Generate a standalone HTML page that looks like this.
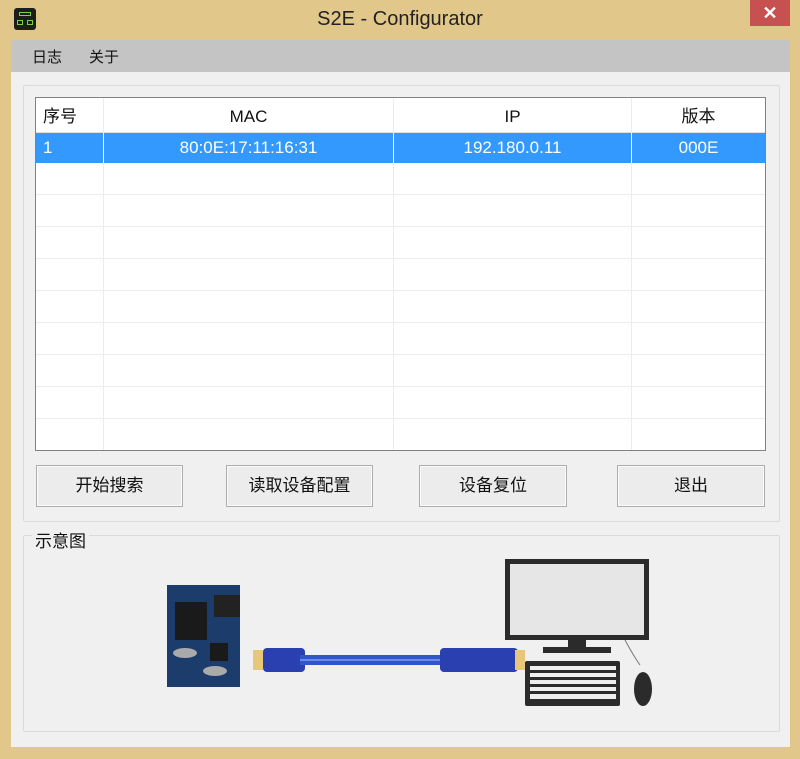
<!DOCTYPE html>
<html><head><meta charset="utf-8"><style>
*{margin:0;padding:0;box-sizing:border-box}
body{width:800px;height:759px;background:#e2c78a;position:relative;overflow:hidden;font-family:"Liberation Sans","Noto Sans CJK SC",sans-serif;color:#111}
.a{position:absolute}
.title{left:0;top:0;width:800px;height:40px;text-align:center;font-size:20px;line-height:38px;color:#222}
.menu{left:11px;top:40px;width:779px;height:32px;background:#c4c4c4;font-size:15px}
.client{left:11px;top:72px;width:779px;height:675px;background:#f0f0f0}
.grp{border:1px solid #dadada;border-radius:2px}
.list{left:35px;top:97px;width:731px;height:354px;background:#fff;border:1px solid #828282}
.row{position:absolute;left:0;width:729px;height:32px;border-bottom:1px solid #ececec}
.cell{position:absolute;top:0;height:100%;text-align:center;font-size:17px;line-height:31px;border-right:1px solid #ececec}
.btn{height:42px;background:#ececec;border:1px solid #adadad;box-shadow:inset 0 0 0 1px #fafafa;font-size:17px;text-align:center;line-height:40px}
</style></head><body>
<div class="a" style="left:14px;top:8px;width:22px;height:22px;background:#1d1d1d;border-radius:3px"><div class="a" style="left:5px;top:4px;width:12px;height:4px;border:1.5px solid #7fd13b"></div><div class="a" style="left:3px;top:12px;width:6px;height:5px;border:1.5px solid #7fd13b"></div><div class="a" style="left:13px;top:12px;width:6px;height:5px;border:1.5px solid #7fd13b"></div></div>
<div class="a title">S2E - Configurator</div>
<div class="a" style="left:750px;top:0;width:40px;height:26px;background:#c75050;color:#fff;text-align:center;font-size:18px;line-height:26px;font-weight:bold">✕</div>
<div class="a menu"><span class="a" style="left:21px;top:6px">日志</span><span class="a" style="left:78px;top:6px">关于</span></div>
<div class="a client"></div>
<div class="a grp" style="left:23px;top:85px;width:757px;height:437px"></div>
<div class="a list">
 <div class="row" style="top:0;height:35px;border-bottom:1px solid #e0e0e0">
  <div class="cell" style="left:0;width:68px;text-align:left;padding-left:7px;line-height:38px">序号</div>
  <div class="cell" style="left:68px;width:290px;line-height:38px">MAC</div>
  <div class="cell" style="left:358px;width:238px;line-height:38px">IP</div>
  <div class="cell" style="left:596px;width:133px;line-height:38px;border-right:none">版本</div>
 </div>
 <div class="row" style="top:35px;height:30px;background:#3399ff;color:#fff;border:none">
  <div class="cell" style="left:0;width:68px;text-align:left;padding-left:7px;line-height:30px;border-color:#fff">1</div>
  <div class="cell" style="left:68px;width:290px;line-height:30px;border-color:#fff">80:0E:17:11:16:31</div>
  <div class="cell" style="left:358px;width:238px;line-height:30px;border-color:#fff">192.180.0.11</div>
  <div class="cell" style="left:596px;width:133px;line-height:30px;border:none">000E</div>
 </div>
 <div class="a" style="left:67px;top:65px;width:1px;height:287px;background:#ececec"></div>
 <div class="a" style="left:357px;top:65px;width:1px;height:287px;background:#ececec"></div>
 <div class="a" style="left:595px;top:65px;width:1px;height:287px;background:#ececec"></div>
 <div class="row" style="top:65px"></div><div class="row" style="top:97px"></div><div class="row" style="top:129px"></div><div class="row" style="top:161px"></div><div class="row" style="top:193px"></div><div class="row" style="top:225px"></div><div class="row" style="top:257px"></div><div class="row" style="top:289px"></div>
</div>
<div class="a btn" style="left:36px;top:465px;width:147px">开始搜索</div>
<div class="a btn" style="left:226px;top:465px;width:147px">读取设备配置</div>
<div class="a btn" style="left:419px;top:465px;width:148px">设备复位</div>
<div class="a btn" style="left:617px;top:465px;width:148px">退出</div>
<div class="a grp" style="left:23px;top:535px;width:757px;height:197px"></div>
<div class="a" style="left:32px;top:527px;background:#f0f0f0;padding:0 3px;font-size:17px">示意图</div>
<svg class="a" style="left:0;top:540px" width="800" height="200">
 <rect x="167" y="45" width="73" height="102" fill="#1c3d6b"/>
 <rect x="175" y="62" width="32" height="38" fill="#1a1a1a"/>
 <rect x="214" y="55" width="26" height="22" fill="#222"/>
 <rect x="210" y="103" width="18" height="18" fill="#1a1a1a"/>
 <ellipse cx="185" cy="113" rx="12" ry="5" fill="#aaa"/><ellipse cx="215" cy="131" rx="12" ry="5" fill="#aaa"/>
 <rect x="253" y="110" width="10" height="20" fill="#e9c77a"/>
 <rect x="263" y="108" width="42" height="24" rx="4" fill="#2a3fb0"/>
 <rect x="300" y="115" width="150" height="10" fill="#2f55c8"/>
 <rect x="300" y="119" width="150" height="2" fill="#6b8ae8"/>
 <rect x="440" y="108" width="78" height="24" rx="4" fill="#2a3fb0"/>
 <rect x="515" y="110" width="10" height="20" fill="#e9c77a"/>
 <rect x="505" y="19" width="144" height="81" fill="#2b2b2b"/>
 <rect x="510" y="24" width="134" height="71" fill="#e6e6e6"/>
 <rect x="568" y="100" width="18" height="10" fill="#2b2b2b"/>
 <rect x="543" y="107" width="68" height="6" fill="#2b2b2b"/>
 <rect x="525" y="121" width="95" height="45" rx="2" fill="#2b2b2b"/>
 <g fill="#eee"><rect x="530" y="126" width="86" height="4"/><rect x="530" y="133" width="86" height="4"/><rect x="530" y="140" width="86" height="4"/><rect x="530" y="147" width="86" height="4"/><rect x="530" y="154" width="86" height="5"/></g>
 <path d="M625 100 Q633 115 640 125" stroke="#777" fill="none"/>
 <ellipse cx="643" cy="149" rx="9" ry="17" fill="#2b2b2b"/>
</svg>
</body></html>
